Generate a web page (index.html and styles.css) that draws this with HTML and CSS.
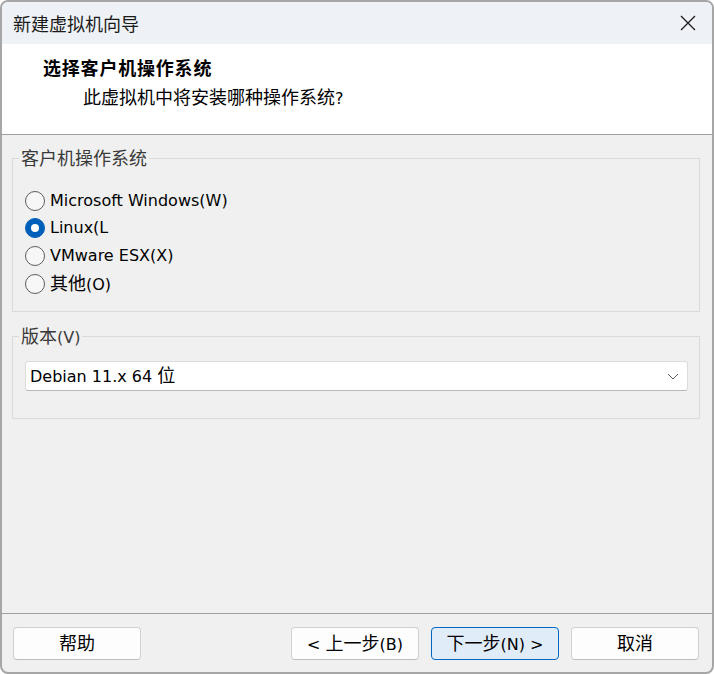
FILE: index.html
```html
<!DOCTYPE html>
<html lang="zh-CN">
<head>
<meta charset="utf-8">
<title>新建虚拟机向导</title>
<link rel="stylesheet" href="styles.css">
</head>
<body>
<div class="window">
  <div class="titlebar">
    <span class="title zh">新建虚拟机向导</span>
    <svg class="close" width="16" height="16" viewBox="0 0 16 16"><path d="M1 1 L15 15 M15 1 L1 15" stroke="#1a1a1a" stroke-width="1.3" fill="none"/></svg>
  </div>
  <div class="header">
    <div class="heading zh">选择客户机操作系统</div>
    <div class="subheading"><span class="zh">此虚拟机中将安装哪种操作系统</span>?</div>
  </div>
  <div class="content">
    <fieldset class="group group-os">
      <legend><span class="zh">客户机操作系统</span></legend>
      <div class="radios">
        <div class="radio"><span class="dot"></span><span class="label">Microsoft Windows(W)</span></div>
        <div class="radio checked"><span class="dot"></span><span class="label">Linux(L</span></div>
        <div class="radio"><span class="dot"></span><span class="label">VMware ESX(X)</span></div>
        <div class="radio"><span class="dot"></span><span class="label"><span class="zh">其他</span>(O)</span></div>
      </div>
    </fieldset>
    <fieldset class="group group-ver">
      <legend><span class="zh">版本</span>(V)</legend>
      <div class="select-wrap">
        <div class="select">
          <span class="value">Debian 11.x 64 <span class="zh">位</span></span>
          <svg class="chev" width="12" height="7" viewBox="0 0 12 7"><path d="M1 1 L6 6 L11 1" stroke="#5a5a5a" stroke-width="1" fill="none"/></svg>
        </div>
      </div>
    </fieldset>
  </div>
  <div class="footer">
    <button class="btn"><span class="btext"><span class="zh">帮助</span></span></button>
    <div class="spacer"></div>
    <button class="btn"><span class="btext">&lt; <span class="zh">上一步</span>(B)</span></button>
    <button class="btn primary"><span class="btext"><span class="zh">下一步</span>(N) &gt;</span></button>
    <button class="btn"><span class="btext"><span class="zh">取消</span></span></button>
  </div>
</div>
</body>
</html>
```
FILE: styles.css
```css
* { box-sizing: border-box; }
html, body { margin: 0; padding: 0; background: #ffffff; }
body {
  font-family: "DejaVu Sans", "Noto Sans CJK SC", sans-serif;
  font-size: 16px;
  color: #000;
}
.zh {
  font-family: "Noto Sans CJK SC", sans-serif;
  font-size: 18px;
}
.window {
  width: 714px;
  height: 674px;
  border: 2px solid #a6a6a6;
  border-radius: 8px;
  overflow: hidden;
  display: flex;
  flex-direction: column;
  background: #f0f0f0;
}
.titlebar {
  height: 42px;
  background: #eef2f6;
  display: flex;
  align-items: center;
  justify-content: space-between;
  padding: 0 16px 0 11px;
  flex: none;
}
.title { color: #1a1a1a; line-height: 24px; }
.close { display: block; }
.header {
  height: 91px;
  background: #ffffff;
  border-bottom: 1px solid #a0a0a0;
  padding: 11px 0 0 41px;
  flex: none;
}
.heading {
  font-weight: 700;
  line-height: 24px;
  letter-spacing: 0.8px;
}
.subheading {
  margin-top: 5px;
  padding-left: 40px;
  line-height: 24px;
}
.content {
  flex: 1;
  padding: 11px 12px 0 10px;
  display: flex;
  flex-direction: column;
}
.group {
  margin: 0;
  padding: 0;
  border: 1px solid #dadada;
  min-width: 0;
}
.group legend {
  margin-left: 6px;
  padding: 0 2px;
  line-height: 22px;
  color: #3a3a3a;
}
.group-ver { margin-top: 12px; }
.radios {
  padding: 16px 12px 13px 12px;
}
.radio {
  height: 27.67px;
  display: flex;
  align-items: center;
  gap: 5px;
}
.dot {
  width: 20px;
  height: 20px;
  border-radius: 50%;
  border: 1px solid #5c5c5c;
  background: #f7f7f7;
  flex: none;
  position: relative;
}
.radio.checked .dot {
  background: #005fb8;
  border-color: #005fb8;
}
.radio.checked .dot::after {
  content: "";
  position: absolute;
  left: 5px;
  top: 5px;
  width: 8px;
  height: 8px;
  border-radius: 50%;
  background: #ffffff;
}
.label { line-height: 22px; white-space: nowrap; }
.select-wrap {
  padding: 12px 11px 27px 12px;
}
.select {
  height: 30px;
  background: #ffffff;
  border: 1px solid #dcdcdc;
  border-bottom-color: #b8b8b8;
  border-radius: 3px;
  display: flex;
  align-items: center;
  justify-content: space-between;
  padding: 0 8px 0 4px;
}
.value { line-height: 22px; }
.chev { display: block; margin-top: 1px; }
.footer {
  height: 59px;
  border-top: 1px solid #a0a0a0;
  display: flex;
  align-items: flex-start;
  gap: 12px;
  padding: 13px 13px 0 11px;
  flex: none;
}
.spacer { flex: 1; }
.btn {
  width: 128px;
  height: 33px;
  background: #fdfdfd;
  border: 1px solid #d0d0d0;
  border-bottom-color: #bdbdbd;
  border-radius: 4px;
  font-family: "DejaVu Sans", "Noto Sans CJK SC", sans-serif;
  font-size: 16px;
  color: #000;
  padding: 0;
  display: flex;
  align-items: center;
  justify-content: center;
  line-height: 22px;
}
.btext { white-space: nowrap; }
.btn.primary {
  background: #e0edf9;
  border: 1px solid #0067c0;
}
```
